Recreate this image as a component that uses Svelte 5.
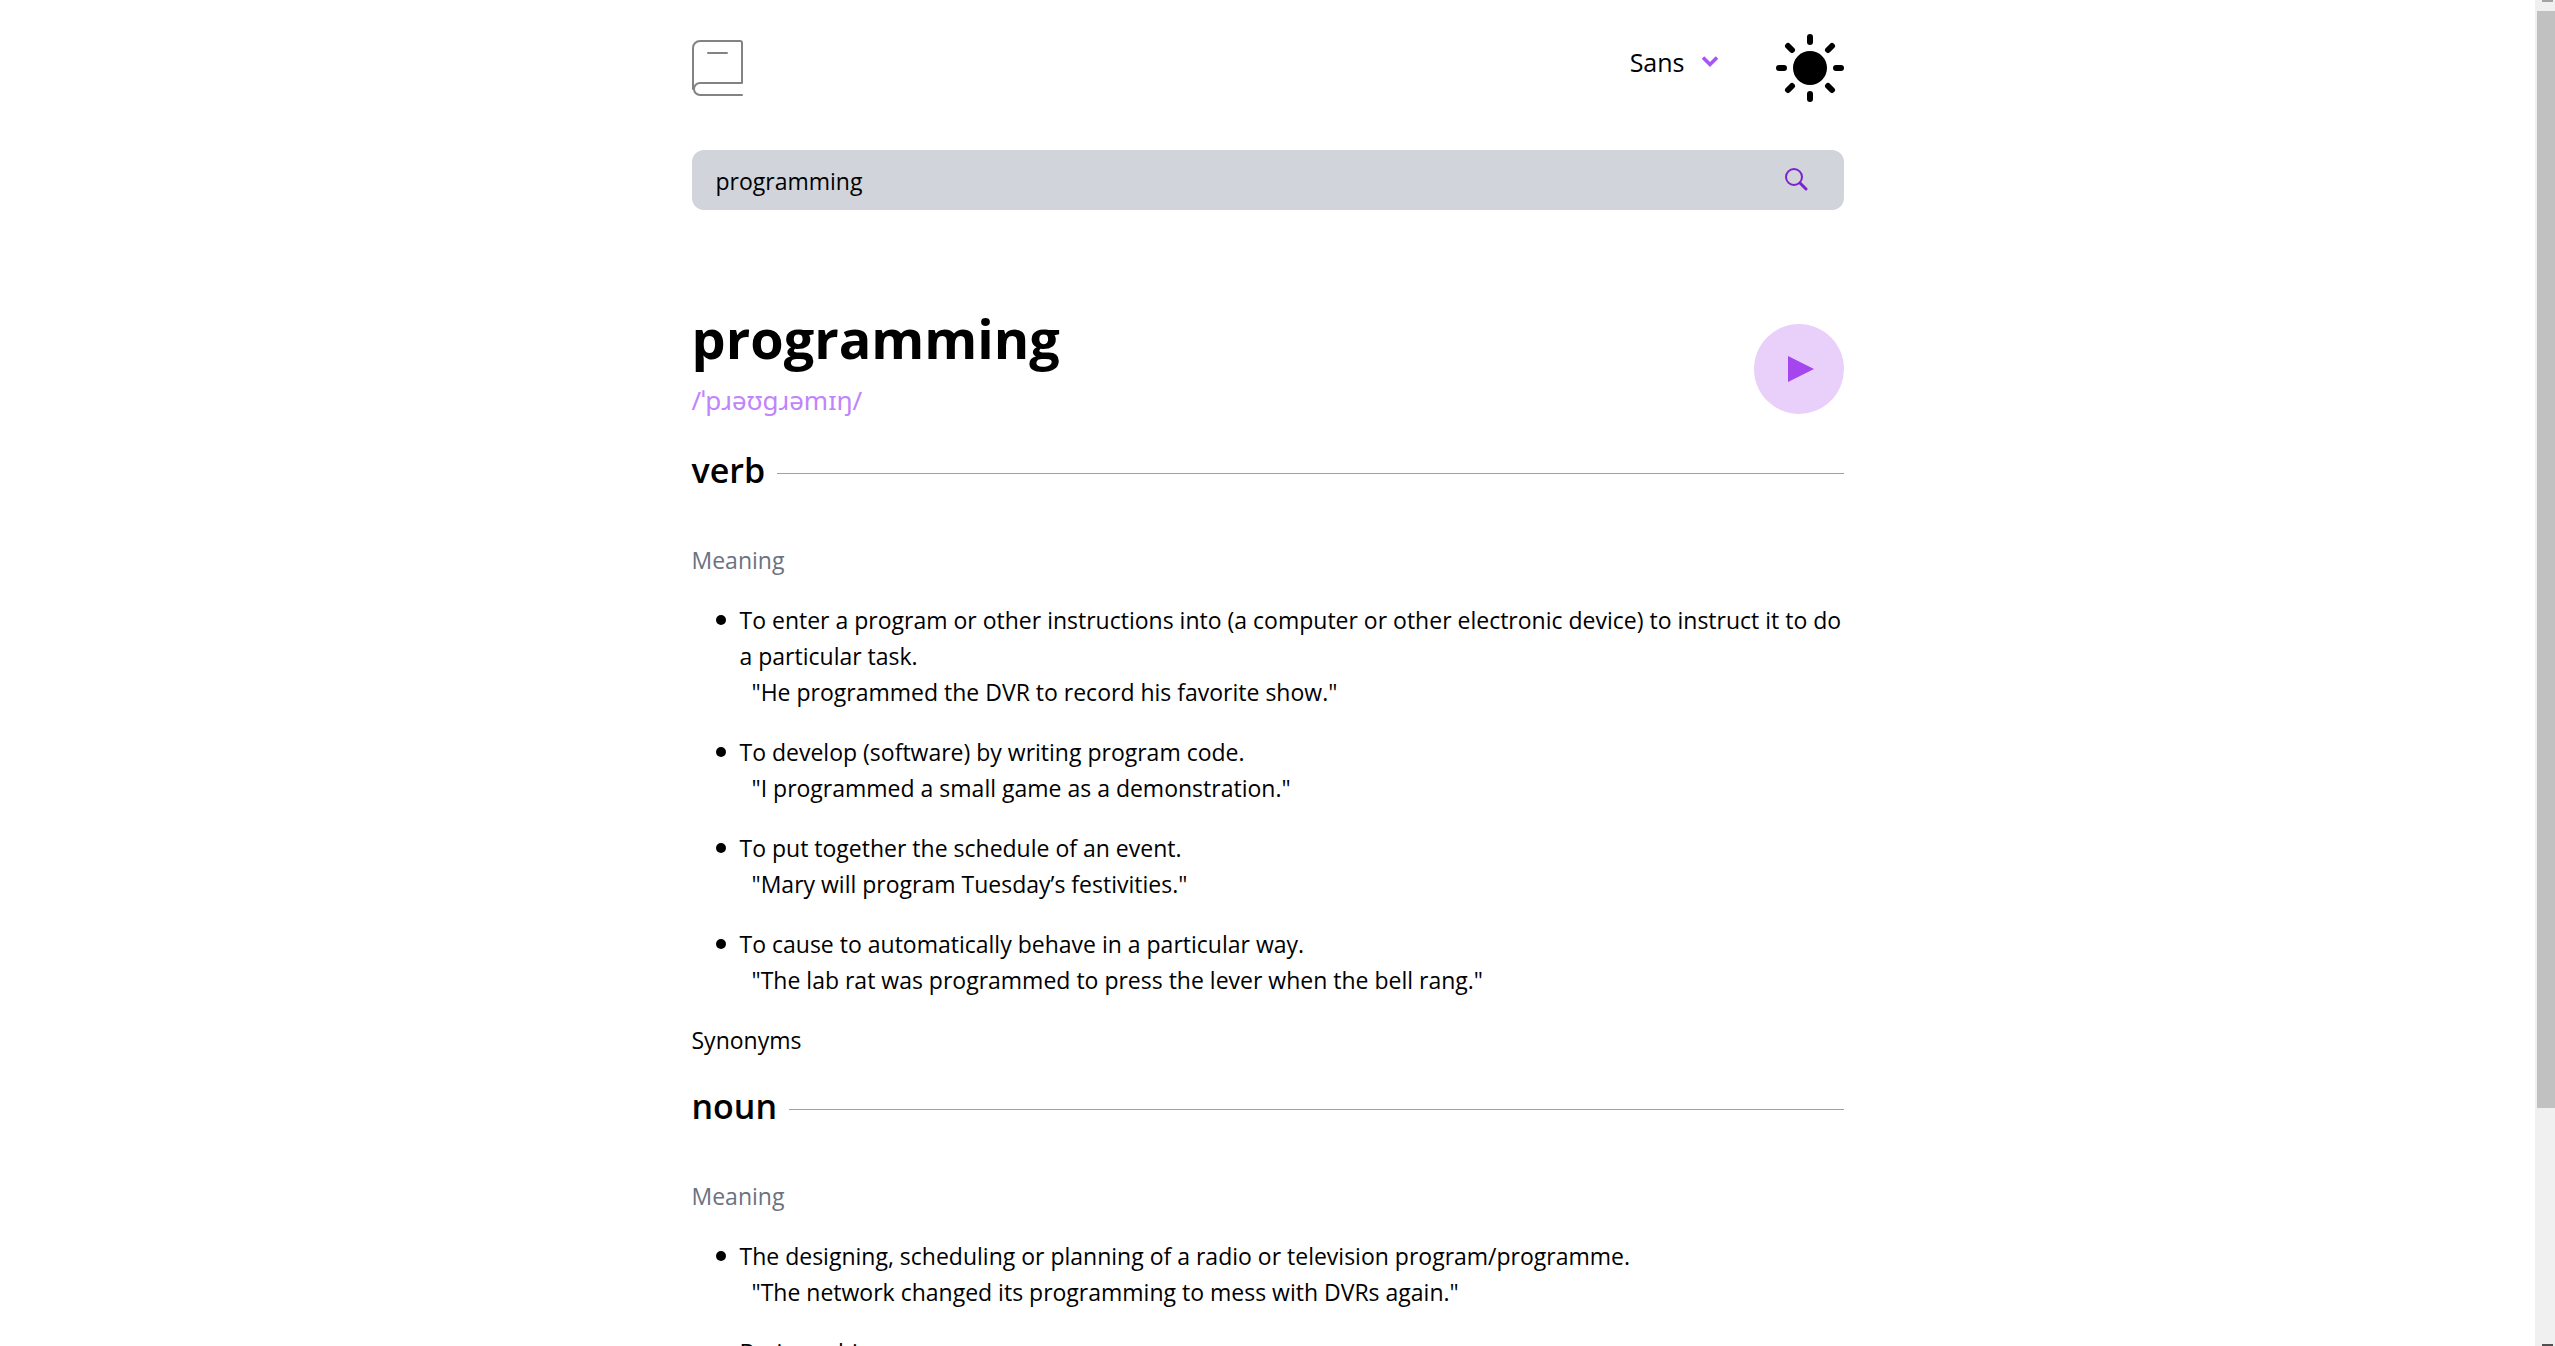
<script>
  let query = $state('programming');
  let font = $state('Sans');

  const entries = [
    {
      part: 'verb',
      synonyms: true,
      meanings: [
        ['To enter a program or other instructions into (a computer or other electronic device) to instruct it to do a particular task.', 'He programmed the DVR to record his favorite show.'],
        ['To develop (software) by writing program code.', 'I programmed a small game as a demonstration.'],
        ['To put together the schedule of an event.', 'Mary will program Tuesday’s festivities.'],
        ['To cause to automatically behave in a particular way.', 'The lab rat was programmed to press the lever when the bell rang.']
      ]
    },
    {
      part: 'noun',
      synonyms: false,
      meanings: [
        ['The designing, scheduling or planning of a radio or television program/programme.', 'The network changed its programming to mess with DVRs again.'],
        ['Brainwashing.', '']
      ]
    }
  ];
</script>

<div class="window">
  <div class="page">
    <main>
      <header>
        <svg class="book" viewBox="0 0 51 57" fill="none" stroke="#838383" stroke-width="2" stroke-linecap="round" stroke-linejoin="round" aria-hidden="true">
          <path d="M50 55H8a6 6 0 0 1 0-12h42V3a2 2 0 0 0-2-2H8a7 7 0 0 0-7 7v41M16 13h19" />
        </svg>
        <div class="tools">
          <label class="font">
            <select bind:value={font} aria-label="Font">
              <option>Sans</option>
              <option>Serif</option>
              <option>Mono</option>
            </select>
            <svg viewBox="0 0 18 12" fill="none" stroke="#a855f7" stroke-width="3.6" aria-hidden="true"><path d="M2 1.5l7 7 7-7" /></svg>
          </label>
          <button class="theme" aria-label="Toggle theme">
            <svg viewBox="0 0 68 68" stroke="#000" stroke-width="6" stroke-linecap="round" aria-hidden="true">
              <circle cx="34" cy="34" r="17" stroke="none" />
              <path d="M34 3v5M34 60v5M3 34h5M60 34h5M12 12l4 4M52 52l4 4M12 56l4-4M52 16l4-4" />
            </svg>
          </button>
        </div>
      </header>

      <form class="search" onsubmit={(e) => e.preventDefault()}>
        <input type="text" bind:value={query} aria-label="Search for a word" />
        <button aria-label="Search">
          <svg viewBox="0 0 24 24" fill="none" stroke="#7e22ce" aria-hidden="true">
            <circle cx="10" cy="9" r="8" stroke-width="2" />
            <path d="M16 15l6 6" stroke-width="3" stroke-linecap="round" />
          </svg>
        </button>
      </form>

      <section class="word">
        <div>
          <h1>programming</h1>
          <p class="phonetic">/ˈpɹəʊɡɹəmɪŋ/</p>
        </div>
        <button class="play" aria-label="Play pronunciation">
          <svg viewBox="0 0 26 26" fill="#a445ed" aria-hidden="true"><path d="M0 0l26 13L0 26z" /></svg>
        </button>
      </section>

      {#each entries as entry}
        <section class="entry">
          <div class="part"><h2>{entry.part}</h2><hr /></div>
          <h3>Meaning</h3>
          <ul>
            {#each entry.meanings as [text, example]}
              <li>
                <div>
                  {text}
                  {#if example}<p>"{example}"</p>{/if}
                </div>
              </li>
            {/each}
          </ul>
          {#if entry.synonyms}<p class="synonyms">Synonyms</p>{/if}
        </section>
      {/each}
    </main>
  </div>
  <div class="scrollbar" aria-hidden="true">
    <span class="cap"></span>
    <span class="thumb"></span>
    <span class="cap end"></span>
  </div>
</div>

<style>
  :global(body) {
    margin: 0;
    background: #fff;
  }
  .window {
    display: flex;
    height: 100vh;
    overflow: hidden;
    color: #000;
    font-family: 'Segoe UI', 'Open Sans', 'Noto Sans', sans-serif;
    font-size: 23px;
    line-height: 36px;
  }
  .page {
    flex: 1;
    overflow: hidden;
  }
  main {
    max-width: 1152px;
    margin: 0 auto;
  }
  h1, h2, h3, p, ul, hr {
    margin: 0;
  }
  button, select, input {
    border: 0;
    padding: 0;
    background: none;
    color: inherit;
    font: inherit;
  }
  svg {
    display: block;
  }
  header {
    display: flex;
    justify-content: space-between;
    align-items: center;
    padding: 34px 0 48px;
  }
  .book {
    width: 51px;
    height: 57px;
  }
  .tools {
    display: flex;
    align-items: center;
    gap: 57px;
  }
  .font {
    display: flex;
    align-items: center;
    gap: 16px;
    padding-bottom: 12px;
    font-size: 25px;
  }
  .font select {
    appearance: none;
    field-sizing: content;
  }
  .font svg {
    width: 18px;
    height: 12px;
  }
  .theme svg {
    width: 68px;
    height: 68px;
  }
  .search {
    display: flex;
    align-items: center;
    height: 60px;
    padding: 0 36px 0 24px;
    border-radius: 12px;
    background: #d1d5db;
  }
  .search input {
    flex: 1;
    min-width: 0;
    padding-top: 2px;
    outline: 0;
  }
  .search svg {
    width: 24px;
    height: 24px;
  }
  .word {
    display: flex;
    justify-content: space-between;
    align-items: flex-end;
    margin: 96px 0 24px;
  }
  h1 {
    margin-bottom: 8px;
    font-size: 54px;
    font-weight: 700;
    line-height: 64px;
  }
  .phonetic {
    color: #c084fc;
    font-family: 'Segoe UI', 'Noto Sans', sans-serif;
    font-size: 26px;
    line-height: 44px;
  }
  .play {
    display: grid;
    place-items: center;
    width: 90px;
    height: 90px;
    margin-bottom: 8px;
    padding-left: 4px;
    border-radius: 50%;
    background: #e9d0fa;
  }
  .play svg {
    width: 26px;
    height: 26px;
  }
  .entry {
    margin-bottom: 24px;
  }
  .part {
    display: flex;
    align-items: center;
    gap: 12px;
    margin-bottom: 48px;
  }
  h2 {
    font-size: 34px;
    font-weight: 600;
    line-height: 48px;
  }
  hr {
    flex: 1;
    margin-top: 6px;
    border: 0;
    border-top: 1px solid #9f9fb0;
  }
  h3 {
    color: #6b7280;
    font-size: 23px;
    font-weight: 400;
  }
  ul {
    display: flex;
    flex-direction: column;
    gap: 24px;
    padding: 24px 0 24px 24px;
    list-style: none;
  }
  li {
    display: flex;
    gap: 14px;
  }
  li::before {
    content: '';
    flex: none;
    width: 10px;
    height: 10px;
    margin-top: 13px;
    border-radius: 50%;
    background: #000;
  }
  li p {
    padding-left: 12px;
  }
  .scrollbar {
    display: flex;
    flex-direction: column;
    align-items: flex-end;
    width: 20px;
    background: #f0f0f0;
  }
  .cap {
    width: 11px;
    height: 2px;
    margin: 0 2px 9px 0;
    background: #a3a3a3;
  }
  .cap.end {
    margin: auto 2px 0 0;
    background: #505050;
  }
  .thumb {
    width: 18px;
    height: 81.5%;
    background: #c1c1c1;
  }
</style>
